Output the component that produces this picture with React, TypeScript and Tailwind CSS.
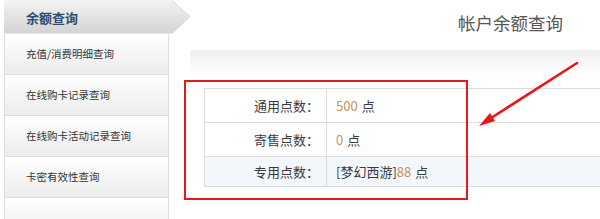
import React from "react";

const font = { fontFamily: '"Noto Sans CJK SC", "Noto Sans", sans-serif' };

const items = ["充值/消费明细查询", "在线购卡记录查询", "在线购卡活动记录查询", "卡密有效性查询", ""];

export default function App() {
  return (
    <div
      className="relative flex w-[600px] h-[219px] bg-white overflow-hidden"
      style={font}
    >
      {/* Sidebar */}
      <div className="w-[169px] shrink-0 pl-[4px] flex flex-col">
        <div className="relative h-[34px] shrink-0 flex items-center pl-[22px] z-10">
          <svg
            className="absolute left-0 top-0"
            width="188"
            height="34"
            viewBox="0 0 188 34"
          >
            <defs>
              <linearGradient id="act" x1="0" y1="0" x2="0" y2="1">
                <stop offset="0" stopColor="#f3f3f3" />
                <stop offset="1" stopColor="#d3d3d3" />
              </linearGradient>
            </defs>
            <polygon points="0,0 168,0 186,16.5 168,33.5 0,33.5" fill="url(#act)" />
            <polyline
              points="168,0.5 186,16.5 168,33.5"
              fill="none"
              stroke="#d8d8d8"
              strokeWidth="1"
            />
          </svg>
          <span className="relative text-[13px] font-bold text-[#2e4b73] leading-none">
            余额查询
          </span>
        </div>
        <div className="flex-1 min-h-0 overflow-hidden flex flex-col border-l border-r border-[#dedede]">
          {items.map((t, i) => (
            <div
              key={i}
              className="h-[41px] shrink-0 flex items-center pl-[21px] border-b border-[#dcdcdc] bg-gradient-to-b from-white to-[#ececec] text-[10.5px] text-[#333]"
            >
              {t}
            </div>
          ))}
        </div>
      </div>

      {/* Main */}
      <div className="flex-1 flex flex-col overflow-hidden">
        <div className="h-[50px] shrink-0 flex items-center justify-end pr-[37px] pb-[3px] text-[17.5px] text-[#555]">
          帐户余额查询
        </div>
        <div className="h-[25px] shrink-0 ml-[21px] bg-gradient-to-b from-[#efefef] to-white" />
        <div className="mt-[13px] ml-[35px] w-[440px] shrink-0 border-l border-t border-[#dcdcdc] text-[13px] text-[#3a3a3a]">
          <div className="flex h-[34px] border-b border-[#dcdcdc]">
            <div className="w-[122px] border-r border-[#dcdcdc] flex items-center justify-end pr-[7px]">
              通用点数：
            </div>
            <div className="flex items-center pl-[9px]">
              <span className="text-[#c2935f]">500</span>
              <span className="ml-[4px]">点</span>
            </div>
          </div>
          <div className="flex h-[34px] border-b border-[#dcdcdc]">
            <div className="w-[122px] border-r border-[#dcdcdc] flex items-center justify-end pr-[7px]">
              寄售点数：
            </div>
            <div className="flex items-center pl-[9px]">
              <span className="text-[#c2935f]">0</span>
              <span className="ml-[4px]">点</span>
            </div>
          </div>
          <div className="flex h-[30px] border-b border-[#dcdcdc] bg-[#f3f6fb]">
            <div className="w-[122px] border-r border-[#dcdcdc] flex items-center justify-end pr-[7px]">
              专用点数：
            </div>
            <div className="flex items-center pl-[9px]">
              <span>[梦幻西游]</span>
              <span className="text-[#c2935f]">88</span>
              <span className="ml-[4px]">点</span>
            </div>
          </div>
        </div>
      </div>

      {/* Annotations */}
      <div className="absolute left-[184px] top-[80px] w-[284px] h-[120px] border-2 border-[#e21b1b]" />
      <svg className="absolute left-0 top-0" width="600" height="219" viewBox="0 0 600 219">
        <line x1="577" y1="63" x2="488" y2="120" stroke="#e81818" strokeWidth="2.6" strokeLinecap="round" />
        <polygon points="479,126 490,113 495,121" fill="#e81818" />
      </svg>
    </div>
  );
}
